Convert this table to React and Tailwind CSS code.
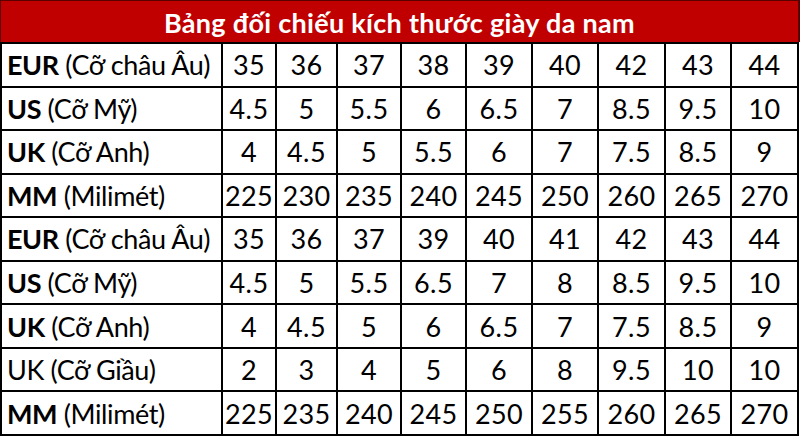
const rows = [
  { b: "EUR", l: " (Cỡ châu Âu)", v: ["35", "36", "37", "38", "39", "40", "42", "43", "44"] },
  { b: "US", l: " (Cỡ Mỹ)", v: ["4.5", "5", "5.5", "6", "6.5", "7", "8.5", "9.5", "10"] },
  { b: "UK", l: " (Cỡ Anh)", v: ["4", "4.5", "5", "5.5", "6", "7", "7.5", "8.5", "9"] },
  { b: "MM", l: " (Milimét)", v: ["225", "230", "235", "240", "245", "250", "260", "265", "270"] },
  { b: "EUR", l: " (Cỡ châu Âu)", v: ["35", "36", "37", "39", "40", "41", "42", "43", "44"] },
  { b: "US", l: " (Cỡ Mỹ)", v: ["4.5", "5", "5.5", "6.5", "7", "8", "8.5", "9.5", "10"] },
  { b: "UK", l: " (Cỡ Anh)", v: ["4", "4.5", "5", "6", "6.5", "7", "7.5", "8.5", "9"] },
  { b: "", l: "UK (Cỡ Giầu)", v: ["2", "3", "4", "5", "6", "8", "9.5", "10", "10"] },
  { b: "MM", l: " (Milimét)", v: ["225", "235", "240", "245", "250", "255", "260", "265", "270"] },
];

export default function App() {
  return (
    <div
      className="w-[800px] h-[436px] flex flex-col bg-white text-black overflow-hidden"
      style={{ fontFamily: "Lato, 'Open Sans', sans-serif" }}
    >
      {/* tiêu đề */}
      <div className="h-[42px] bg-[#c00000] border-t border-l border-r-2 border-[#5a0000] flex items-center justify-center">
        <h1 className="text-white font-bold text-[27px] leading-none tracking-[0.3px] pt-[2px]">
          Bảng đối chiếu kích thước giày da nam
        </h1>
      </div>

      {/* bảng */}
      <div className="flex-1 grid grid-cols-[219px_52px_59px_62px_63px_64px_64px_65px_64px_65px] grid-rows-9 gap-[2px] bg-black p-[2px] w-[799px]">
        {rows.map((r, i) => (
          <div key={i} className="contents">
            <div className="bg-white flex items-center pl-[5px] text-[27px] leading-none whitespace-pre tracking-[-0.4px]">
              <span>
                {r.b && <b className="font-bold">{r.b}</b>}
                {r.l}
              </span>
            </div>
            {r.v.map((n, j) => (
              <div
                key={j}
                className="bg-white flex items-center justify-center text-[27px] leading-none tracking-[0.4px]"
              >
                {n}
              </div>
            ))}
          </div>
        ))}
      </div>
    </div>
  );
}
